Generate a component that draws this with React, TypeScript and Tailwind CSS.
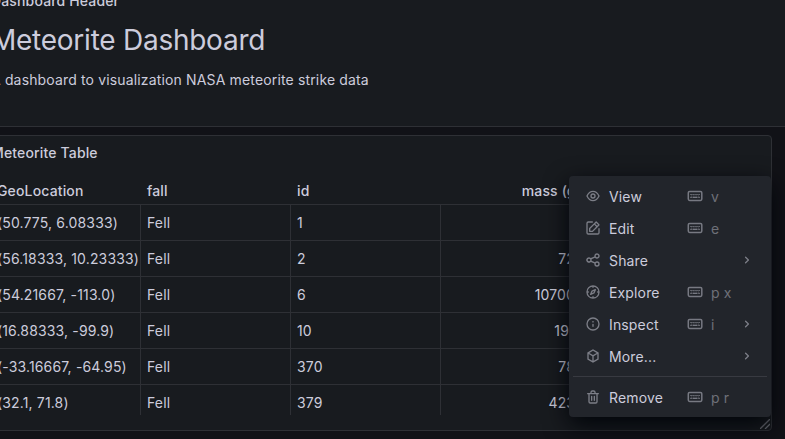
import React from "react";

const PATHS = {
  eye: "M21.92,11.6C19.9,6.91,16.1,4,12,4S4.1,6.91,2.08,11.6a1,1,0,0,0,0,.8C4.1,17.09,7.9,20,12,20s7.9-2.91,9.92-7.6A1,1,0,0,0,21.92,11.6ZM12,18c-3.17,0-6.17-2.29-7.9-6C5.83,8.29,8.83,6,12,6s6.17,2.29,7.9,6C18.17,15.71,15.17,18,12,18ZM12,8a4,4,0,1,0,4,4A4,4,0,0,0,12,8Zm0,6a2,2,0,1,1,2-2A2,2,0,0,1,12,14Z",
  edit: "M21,12a1,1,0,0,0-1,1v6a1,1,0,0,1-1,1H5a1,1,0,0,1-1-1V5A1,1,0,0,1,5,4h6a1,1,0,0,0,0-2H5A3,3,0,0,0,2,5V19a3,3,0,0,0,3,3H19a3,3,0,0,0,3-3V13A1,1,0,0,0,21,12ZM6,12.76V17a1,1,0,0,0,1,1h4.24a1,1,0,0,0,.71-.29l6.92-6.93h0L21.71,8a1,1,0,0,0,0-1.42L17.47,2.29a1,1,0,0,0-1.42,0L13.23,5.12h0L6.29,12.05A1,1,0,0,0,6,12.76ZM16.76,4.41l2.83,2.83L18.17,8.66,15.34,5.83ZM8,13.17l5.93-5.93,2.83,2.83L10.83,16H8Z",
  share: "M18,14a4,4,0,0,0-3.08,1.48l-5.1-2.35a3.64,3.64,0,0,0,0-2.26l5.1-2.35A4,4,0,1,0,14,6a4.17,4.17,0,0,0,.07.71L8.79,9.14a4,4,0,1,0,0,5.72l5.28,2.43A4.17,4.17,0,0,0,14,18a4,4,0,1,0,4-4ZM18,4a2,2,0,1,1-2,2A2,2,0,0,1,18,4ZM6,14a2,2,0,1,1,2-2A2,2,0,0,1,6,14Zm12,6a2,2,0,1,1,2-2A2,2,0,0,1,18,20Z",
  compass: "M12,2A10,10,0,1,0,22,12,10,10,0,0,0,12,2Zm1,17.93V19a1,1,0,0,0-2,0v.93A8,8,0,0,1,4.07,13H5a1,1,0,0,0,0-2H4.07A8,8,0,0,1,11,4.07V5a1,1,0,0,0,2,0V4.07A8,8,0,0,1,19.93,11H19a1,1,0,0,0,0,2h.93A8,8,0,0,1,13,19.93ZM15.14,7.55l-5,2.12a1,1,0,0,0-.52.52l-2.12,5a1,1,0,0,0,.21,1.1,1,1,0,0,0,.7.3.93.93,0,0,0,.4-.09l5-2.12a1,1,0,0,0,.52-.52l2.12-5a1,1,0,0,0-1.31-1.31Zm-2.49,5.1-2.28,1,1-2.28,2.28-1Z",
  info: "M12,2A10,10,0,1,0,22,12,10,10,0,0,0,12,2Zm0,18a8,8,0,1,1,8-8A8,8,0,0,1,12,20Zm0-8.5a1,1,0,0,0-1,1v3a1,1,0,0,0,2,0v-3A1,1,0,0,0,12,11.5Zm0-4a1.25,1.25,0,1,0,1.25,1.25A1.25,1.25,0,0,0,12,7.5Z",
  cube: "M12,1.9 20.5,6.8V17.2L12,22.1 3.5,17.2V6.8ZM12,4.2 6.5,7.4 12,10.6 17.5,7.4ZM5.5,9.1V16L11,19.2V12.3ZM18.5,9.1 13,12.3V19.2L18.5,16Z",
  trash: "M10,18a1,1,0,0,0,1-1V11a1,1,0,0,0-2,0v6A1,1,0,0,0,10,18ZM20,6H16V5a3,3,0,0,0-3-3H11A3,3,0,0,0,8,5V6H4A1,1,0,0,0,4,8H5V19a3,3,0,0,0,3,3h8a3,3,0,0,0,3-3V8h1a1,1,0,0,0,0-2ZM10,5a1,1,0,0,1,1-1h2a1,1,0,0,1,1,1V6H10Zm7,14a1,1,0,0,1-1,1H8a1,1,0,0,1-1-1V8H17Zm-3-1a1,1,0,0,0,1-1V11a1,1,0,0,0-2,0v6A1,1,0,0,0,14,18Z",
  angle: "M14.83,11.29,10.59,7.05a1,1,0,0,0-1.42,0,1,1,0,0,0,0,1.41L12.71,12,9.17,15.54a1,1,0,0,0,0,1.41,1,1,0,0,0,.71.29,1,1,0,0,0,.71-.29l4.24-4.24A1,1,0,0,0,14.83,11.29Z",
};

type IconName = keyof typeof PATHS;

function Icon({ name }: { name: IconName }) {
  return (
    <svg viewBox="0 0 24 24" className="h-4 w-4 shrink-0 fill-current text-[#7c7e87]" fillRule="evenodd">
      <path d={PATHS[name]} />
    </svg>
  );
}

function Keyboard() {
  return (
    <svg viewBox="0 0 16 16" className="h-4 w-4 shrink-0 text-[#777982]" fill="none" stroke="currentColor">
      <rect x="1.3" y="3.5" width="13.5" height="8.9" rx="1.3" strokeWidth="1.5" />
      <path d="M3.3 6.5h1.5M5.4 6.5h1.4M7.4 6.5h1.3M9.3 6.5h1.4M11.4 6.5h1.4M3.3 9.4h1.5M5.5 9.4h5M11.3 9.4h1.5" strokeWidth="1.2" />
      <path d="M4.2 8h1M6.4 8h1M8.6 8h1M10.8 8h1" strokeWidth="0.7" />
    </svg>
  );
}

interface Item {
  icon: IconName;
  label: string;
  keys?: string;
  submenu?: boolean;
}

const ITEMS: Item[] = [
  { icon: "eye", label: "View", keys: "v" },
  { icon: "edit", label: "Edit", keys: "e" },
  { icon: "share", label: "Share", submenu: true },
  { icon: "compass", label: "Explore", keys: "p x" },
  { icon: "info", label: "Inspect", keys: "i", submenu: true },
  { icon: "cube", label: "More...", submenu: true },
];

function MenuItem({ item }: { item: Item }) {
  return (
    <div className="flex h-8 items-center px-3 text-[#6e7078]">
      <Icon name={item.icon} />
      <span className="ml-2 w-[78px] pt-px text-[#ccccdc]">{item.label}</span>
      {item.keys && (
        <span className="flex items-center gap-2">
          <Keyboard />
          <span className="pt-px">{item.keys}</span>
        </span>
      )}
      {item.submenu && (
        <span className="ml-auto">
          <Icon name="angle" />
        </span>
      )}
    </div>
  );
}

function PanelMenu() {
  return (
    <div className="absolute top-[176px] left-[569px] h-[241px] w-[202px] rounded-sm bg-[#22252b] px-1 pt-1 shadow-[0_8px_24px_rgb(1,4,9)]">
      {ITEMS.map((item) => (
        <MenuItem key={item.label} item={item} />
      ))}
      <div className="mt-1 mb-1 h-px bg-[#383a41]" />
      <MenuItem item={{ icon: "trash", label: "Remove", keys: "p r" }} />
    </div>
  );
}

const ROWS = [
  ["(50.775, 6.08333)", "Fell", "1", "21"],
  ["(56.18333, 10.23333)", "Fell", "2", "720"],
  ["(54.21667, -113.0)", "Fell", "6", "107000"],
  ["(16.88333, -99.9)", "Fell", "10", "1914"],
  ["(-33.16667, -64.95)", "Fell", "370", "780"],
  ["(32.1, 71.8)", "Fell", "379", "4239"],
];

function MeteoriteTable() {
  return (
    <div className="h-[238px] overflow-hidden">
      <div className="grid h-7 grid-cols-[150px_150px_150px_150px_1fr] border-b border-[#2e3035] font-medium">
        <span className="px-1.5 pt-[3px]">GeoLocation</span>
        <span className="px-1.5 pt-[3px]">fall</span>
        <span className="px-1.5 pt-[3px]">id</span>
        <span className="pt-[3px] pr-2.5 text-right">mass (g)</span>
      </div>
      {ROWS.map((row) => (
        <div key={row[2]} className="grid h-9 grid-cols-[150px_150px_150px_150px_1fr] border-b border-[#2e3035]">
          {row.map((cell, i) => (
            <span
              key={i}
              className={`border-r border-[#2e3035] px-1.5 pt-[7px] whitespace-nowrap ${i === 3 ? "text-right" : ""}`}
            >
              {cell}
            </span>
          ))}
        </div>
      ))}
    </div>
  );
}

export default function App() {
  return (
    <div className="relative h-[439px] w-[785px] overflow-hidden bg-[#111217] font-['Inter',sans-serif] text-sm leading-[22px] tracking-[0.15px] text-[#ccccdc]">
      <header className="-ml-[18px] flow-root h-[127px] w-[820px] border-b border-[#2e3035] bg-[#181b1f] pl-[9px]">
        <div className="-mt-2.5 h-[22px] font-medium">Dashboard Header</div>
        <h1 className="mt-3 h-8 text-[28px] leading-8 font-normal tracking-[-0.25px]">Meteorite Dashboard</h1>
        <p className="mt-[13px]">A dashboard to visualization NASA meteorite strike data</p>
      </header>
      <section className="relative mt-2 -ml-[18px] h-[296px] w-[790px] rounded-sm border border-[#2e3035] bg-[#181b1f] px-2">
        <h2 className="h-[41px] pt-1.5 font-medium">Meteorite Table</h2>
        <MeteoriteTable />
        <svg viewBox="0 0 10 10" className="absolute right-px bottom-px h-2.5 w-2.5" stroke="#6e7078" strokeWidth="1.3">
          <path d="M0 10L10 0M5 10L10 5" />
        </svg>
      </section>
      <PanelMenu />
    </div>
  );
}
